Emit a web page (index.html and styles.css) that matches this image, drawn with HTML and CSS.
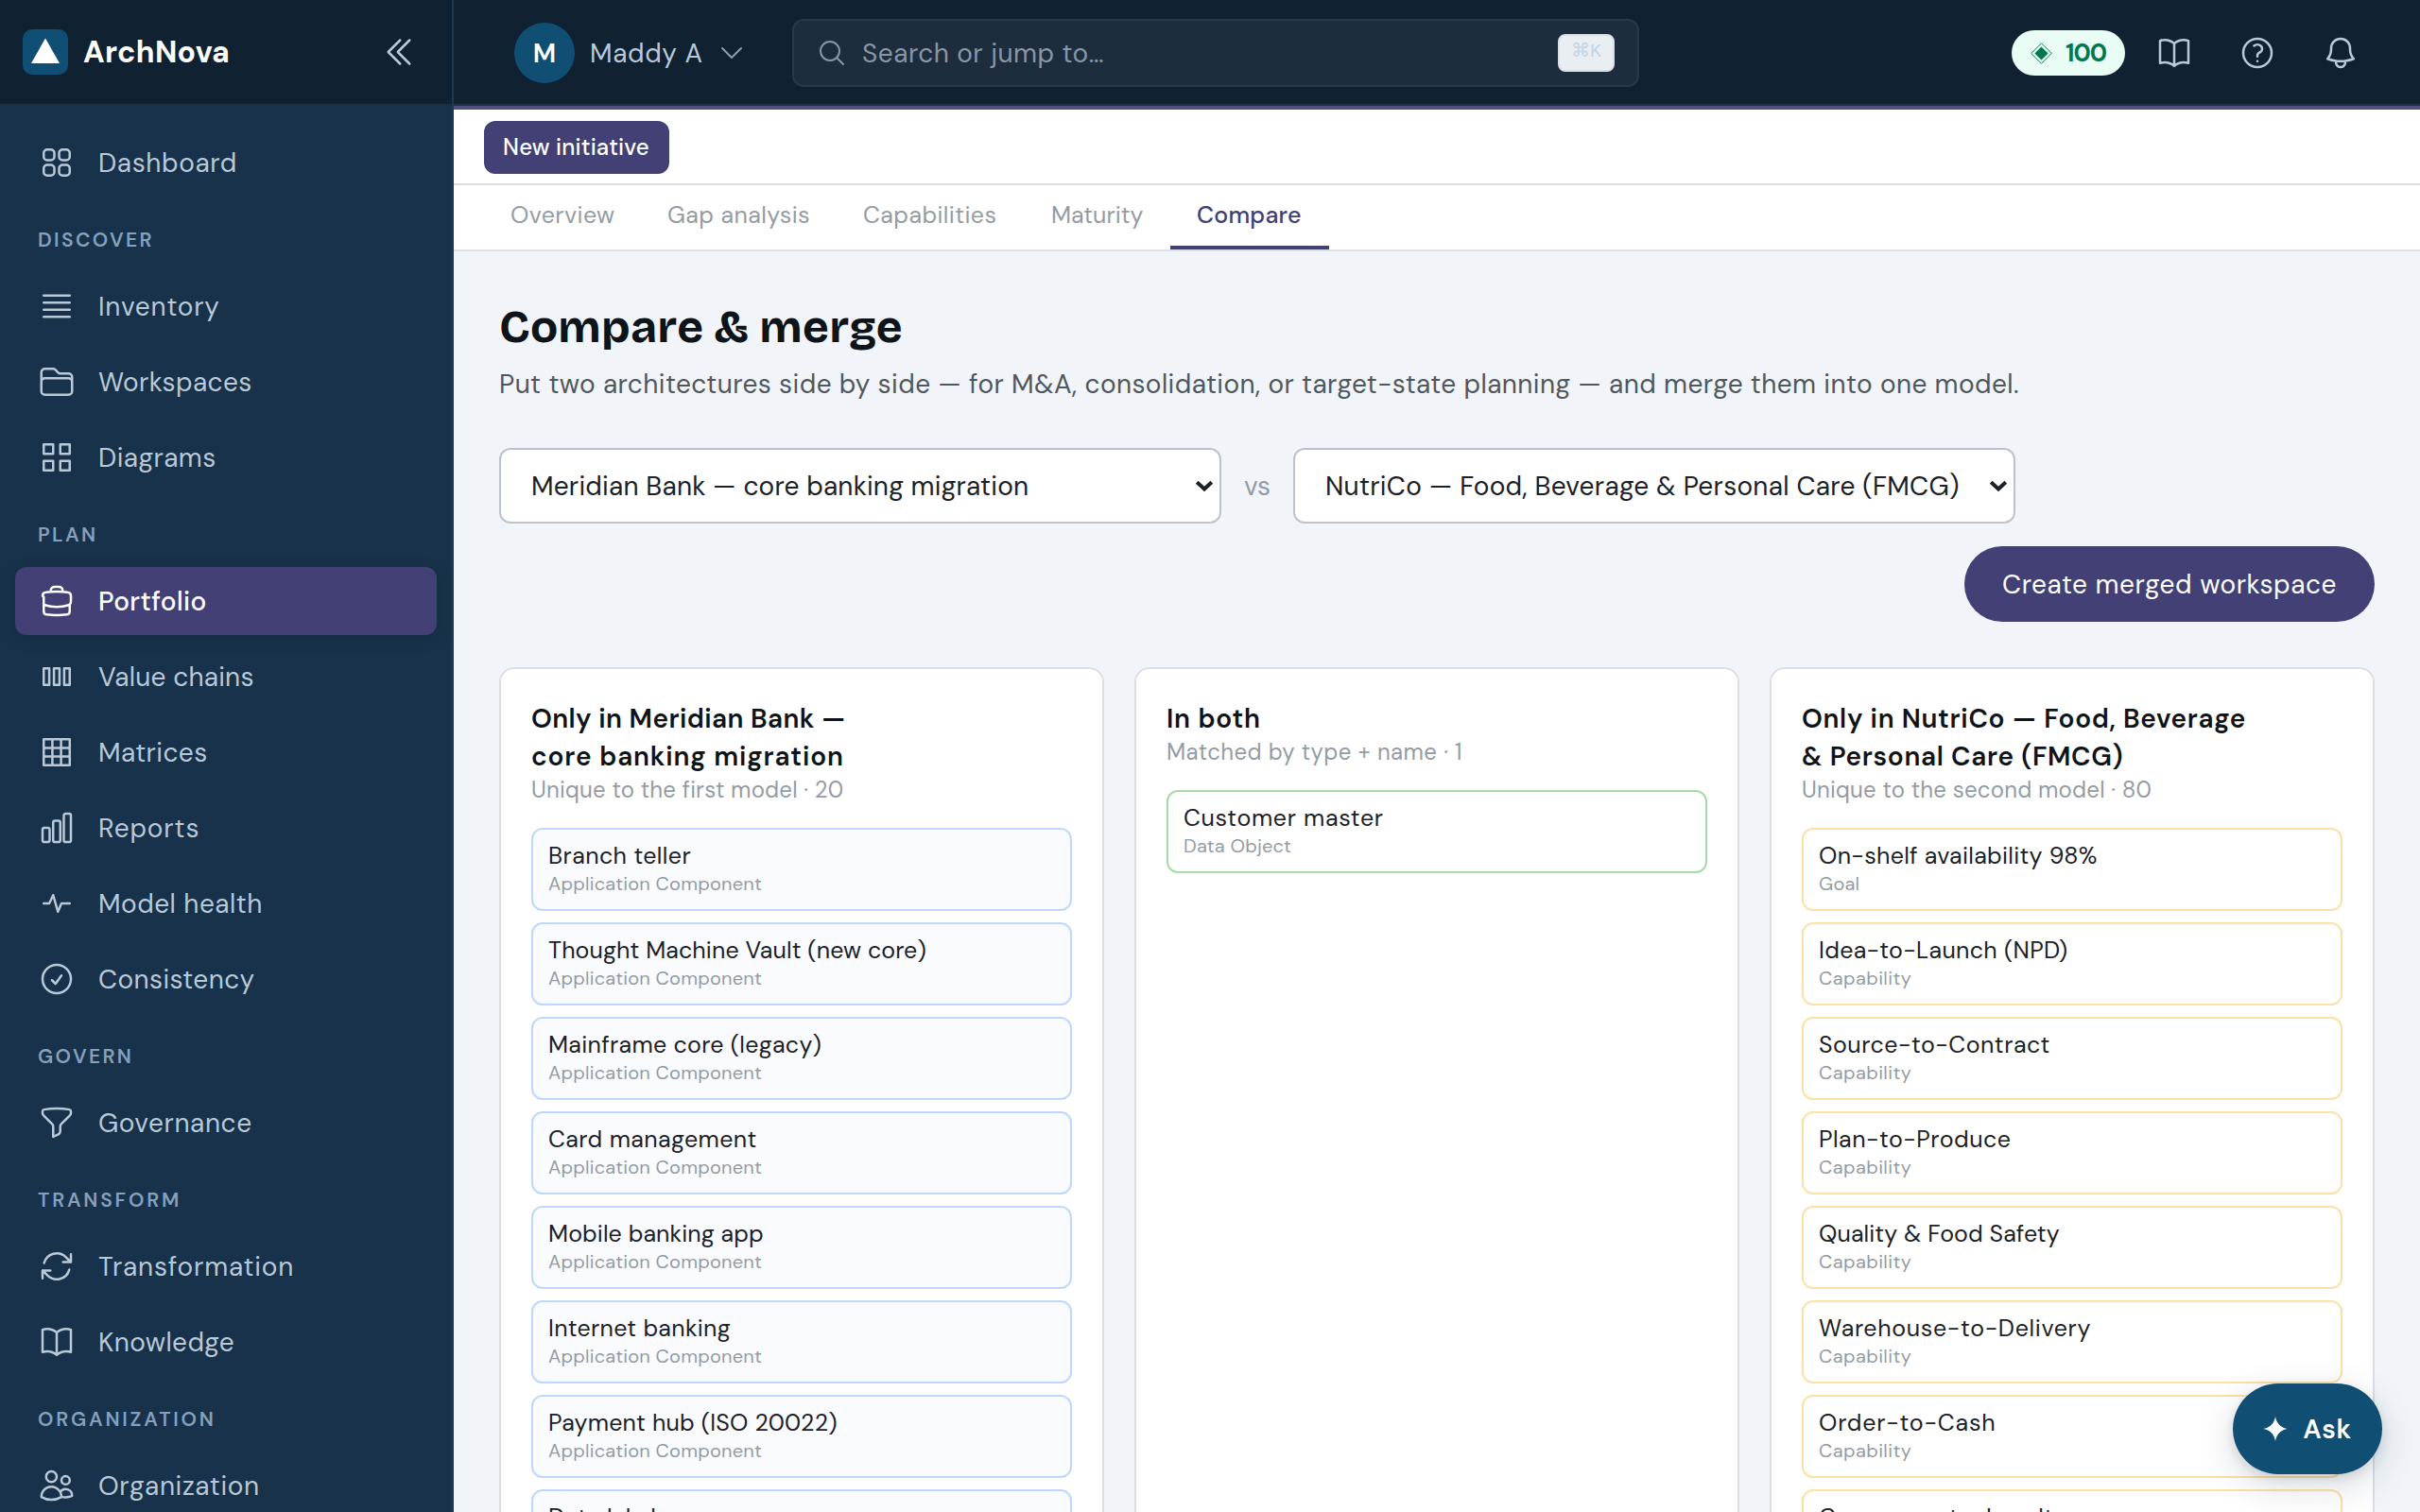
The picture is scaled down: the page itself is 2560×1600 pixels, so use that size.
FILE: index.html
```html
<!DOCTYPE html>
<html lang="en">
<head>
<meta charset="utf-8">
<title>ArchNova – Compare &amp; merge</title>
<link rel="stylesheet" href="styles.css">
</head>
<body>
<div class="app">
  <aside class="sidebar">
    <div class="brand">
      <span class="logo"><svg viewBox="0 0 48 48"><path d="M24 9.5 39 36H9Z"/></svg></span>
      <span class="brand-name">ArchNova</span>
      <svg class="icon collapse" viewBox="0 0 24 24"><path d="m18.75 4.5-7.5 7.5 7.5 7.5m-6-15L5.25 12l7.5 7.5"/></svg>
    </div>
    <nav class="nav">
      <a class="nav-item ls-6"><svg class="icon" viewBox="0 0 24 24"><path d="M3.75 6A2.25 2.25 0 0 1 6 3.75h2.25A2.25 2.25 0 0 1 10.5 6v2.25a2.25 2.25 0 0 1-2.25 2.25H6a2.25 2.25 0 0 1-2.25-2.25V6ZM3.75 15.75A2.25 2.25 0 0 1 6 13.5h2.25a2.25 2.25 0 0 1 2.25 2.25V18a2.25 2.25 0 0 1-2.25 2.25H6A2.25 2.25 0 0 1 3.75 18v-2.25ZM13.5 6a2.25 2.25 0 0 1 2.25-2.25H18A2.25 2.25 0 0 1 20.25 6v2.25A2.25 2.25 0 0 1 18 10.5h-2.25a2.25 2.25 0 0 1-2.25-2.25V6ZM13.5 15.75a2.25 2.25 0 0 1 2.25-2.25H18a2.25 2.25 0 0 1 2.25 2.25V18A2.25 2.25 0 0 1 18 20.25h-2.25A2.25 2.25 0 0 1 13.5 18v-2.25Z"/></svg>Dashboard</a>
      <h2 class="nav-heading">DISCOVER</h2>
      <a class="nav-item ls-8"><svg class="icon" viewBox="0 0 24 24"><path d="M3.75 5.25h16.5m-16.5 4.5h16.5m-16.5 4.5h16.5m-16.5 4.5h16.5"/></svg>Inventory</a>
      <a class="nav-item"><svg class="icon" viewBox="0 0 24 24"><path d="M2.25 12.75V12A2.25 2.25 0 0 1 4.5 9.75h15A2.25 2.25 0 0 1 21.75 12v.75m-8.69-6.44-2.12-2.12a1.5 1.5 0 0 0-1.061-.44H4.5A2.25 2.25 0 0 0 2.25 6v12a2.25 2.25 0 0 0 2.25 2.25h15A2.25 2.25 0 0 0 21.75 18V9a2.25 2.25 0 0 0-2.25-2.25h-5.379a1.5 1.5 0 0 1-1.06-.44Z"/></svg>Workspaces</a>
      <a class="nav-item"><svg class="icon" viewBox="0 0 24 24"><path d="M3.75 3.75h6v6h-6zM14.25 3.75h6v6h-6zM3.75 14.25h6v6h-6zM14.25 14.25h6v6h-6z"/></svg>Diagrams</a>
      <h2 class="nav-heading">PLAN</h2>
      <a class="nav-item active"><svg class="icon" viewBox="0 0 24 24"><path d="M20.25 14.15v4.25c0 1.094-.787 2.036-1.872 2.18-2.087.277-4.216.42-6.378.42s-4.291-.143-6.378-.42c-1.085-.144-1.872-1.086-1.872-2.18v-4.25m16.5 0a2.18 2.18 0 0 0 .75-1.661V8.706c0-1.081-.768-2.015-1.837-2.175a48.114 48.114 0 0 0-3.413-.387m4.5 8.006c-.194.165-.42.295-.673.38A23.978 23.978 0 0 1 12 15.75c-2.648 0-5.195-.429-7.577-1.22a2.016 2.016 0 0 1-.673-.38m0 0V9.4A2.18 2.18 0 0 1 3 8.706c0-1.081.768-2.015 1.837-2.175a48.111 48.111 0 0 1 3.413-.387m7.5 0V5.25A2.25 2.25 0 0 0 13.5 3h-3a2.25 2.25 0 0 0-2.25 2.25v.894m7.5 0a48.667 48.667 0 0 0-7.5 0"/></svg>Portfolio</a>
      <a class="nav-item ls-2"><svg class="icon" viewBox="0 0 24 24"><path d="M3.75 6.75h3.5v10.5h-3.5zM10.25 6.75h3.5v10.5h-3.5zM16.75 6.75h3.5v10.5h-3.5z"/></svg>Value chains</a>
      <a class="nav-item"><svg class="icon" viewBox="0 0 24 24"><path d="M3.75 3.75h16.5v16.5H3.75zM3.75 9.25h16.5M3.75 14.75h16.5M9.25 3.75v16.5M14.75 3.75v16.5"/></svg>Matrices</a>
      <a class="nav-item ls-9"><svg class="icon" viewBox="0 0 24 24"><path d="M3 13.125C3 12.504 3.504 12 4.125 12h2.25c.621 0 1.125.504 1.125 1.125v6.75C7.5 20.496 6.996 21 6.375 21h-2.25A1.125 1.125 0 0 1 3 19.875v-6.75ZM9.75 8.625c0-.621.504-1.125 1.125-1.125h2.25c.621 0 1.125.504 1.125 1.125v11.25c0 .621-.504 1.125-1.125 1.125h-2.25a1.125 1.125 0 0 1-1.125-1.125V8.625ZM16.5 4.125c0-.621.504-1.125 1.125-1.125h2.25C20.496 3 21 3.504 21 4.125v15.75c0 .621-.504 1.125-1.125 1.125h-2.25a1.125 1.125 0 0 1-1.125-1.125V4.125Z"/></svg>Reports</a>
      <a class="nav-item ls-5"><svg class="icon" viewBox="0 0 24 24"><path d="M3.75 12h3.5l2.5-5.25 3 10.5L15 12h5.25"/></svg>Model health</a>
      <a class="nav-item"><svg class="icon" viewBox="0 0 24 24"><path d="M9 12.75 11.25 15 15 9.75M21 12a9 9 0 1 1-18 0 9 9 0 0 1 18 0Z"/></svg>Consistency</a>
      <h2 class="nav-heading">GOVERN</h2>
      <a class="nav-item ls-6"><svg class="icon" viewBox="0 0 24 24"><path d="M12 3c2.755 0 5.455.232 8.083.678.533.09.917.556.917 1.096v1.044a2.25 2.25 0 0 1-.659 1.591l-5.432 5.432a2.25 2.25 0 0 0-.659 1.591v2.927a2.25 2.25 0 0 1-1.244 2.013L9.75 21v-6.568a2.25 2.25 0 0 0-.659-1.591L3.659 7.409A2.25 2.25 0 0 1 3 5.818V4.774c0-.54.384-1.006.917-1.096A48.32 48.32 0 0 1 12 3Z"/></svg>Governance</a>
      <h2 class="nav-heading wide">TRANSFORM</h2>
      <a class="nav-item ls-8"><svg class="icon" viewBox="0 0 24 24"><path d="M16.023 9.348h4.992v-.001M2.985 19.644v-4.992m0 0h4.992m-4.993 0 3.181 3.183a8.25 8.25 0 0 0 13.803-3.7M4.031 9.865a8.25 8.25 0 0 1 13.803-3.7l3.181 3.182m0-4.991v4.99"/></svg>Transformation</a>
      <a class="nav-item"><svg class="icon" viewBox="0 0 24 24"><path d="M12 6.042A8.967 8.967 0 0 0 6 3.75c-1.052 0-2.062.18-3 .512v14.25A8.987 8.987 0 0 1 6 18c2.305 0 4.408.867 6 2.292m0-14.25a8.966 8.966 0 0 1 6-2.292c1.052 0 2.062.18 3 .512v14.25A8.987 8.987 0 0 0 18 18a8.967 8.967 0 0 0-6 2.292m0-14.25v14.25"/></svg>Knowledge</a>
      <h2 class="nav-heading wide">ORGANIZATION</h2>
      <a class="nav-item ls-6"><svg class="icon" viewBox="0 0 24 24"><path d="M15 19.128a9.38 9.38 0 0 0 2.625.372 9.337 9.337 0 0 0 4.121-.952 4.125 4.125 0 0 0-7.533-2.493M15 19.128v-.003c0-1.113-.285-2.16-.786-3.07M15 19.128v.106A12.318 12.318 0 0 1 8.624 21c-2.331 0-4.512-.645-6.374-1.766l-.001-.109a6.375 6.375 0 0 1 11.964-3.07M12 6.375a3.375 3.375 0 1 1-6.75 0 3.375 3.375 0 0 1 6.75 0Zm8.25 2.25a2.625 2.625 0 1 1-5.25 0 2.625 2.625 0 0 1 5.25 0Z"/></svg>Organization</a>
    </nav>
  </aside>

  <div class="main">
    <header class="topbar">
      <div class="user">
        <span class="avatar">M</span>
        <span class="user-name">Maddy A</span>
        <svg class="icon icon-sm" viewBox="0 0 24 24"><path d="m19.5 8.25-7.5 7.5-7.5-7.5"/></svg>
      </div>
      <div class="search">
        <svg class="icon icon-sm" viewBox="0 0 24 24"><path d="m21 21-5.197-5.197m0 0A7.5 7.5 0 1 0 5.196 5.196a7.5 7.5 0 0 0 10.607 10.607Z"/></svg>
        <span class="placeholder">Search or jump to…</span>
        <kbd class="kbd">⌘K</kbd>
      </div>
      <div class="actions">
        <span class="credits"><svg viewBox="0 0 24 24"><path class="ring" d="M12 .8 23.2 12 12 23.2.8 12Z"/><path d="M12 4.6 19.4 12 12 19.4 4.6 12Z"/></svg>100</span>
        <svg class="icon" viewBox="0 0 24 24"><path d="M12 6.042A8.967 8.967 0 0 0 6 3.75c-1.052 0-2.062.18-3 .512v14.25A8.987 8.987 0 0 1 6 18c2.305 0 4.408.867 6 2.292m0-14.25a8.966 8.966 0 0 1 6-2.292c1.052 0 2.062.18 3 .512v14.25A8.987 8.987 0 0 0 18 18a8.967 8.967 0 0 0-6 2.292m0-14.25v14.25"/></svg>
        <svg class="icon" viewBox="0 0 24 24"><path d="M9.879 7.519c1.171-1.025 3.071-1.025 4.242 0 1.172 1.025 1.172 2.687 0 3.712-.203.179-.43.326-.67.442-.745.361-1.45.999-1.45 1.827v.75M21 12a9 9 0 1 1-18 0 9 9 0 0 1 18 0Zm-9 5.25h.008v.008H12v-.008Z"/></svg>
        <svg class="icon" viewBox="0 0 24 24"><path d="M14.857 17.082a23.848 23.848 0 0 0 5.454-1.31A8.967 8.967 0 0 1 18 9.75V9A6 6 0 0 0 6 9v.75a8.967 8.967 0 0 1-2.312 6.022c1.733.64 3.56 1.085 5.455 1.31m5.714 0a24.255 24.255 0 0 1-5.714 0m5.714 0a3 3 0 1 1-5.714 0"/></svg>
      </div>
    </header>
    <div class="toolbar"><button class="btn-new">New initiative</button></div>
    <div class="tabs">
      <a class="tab ls-4">Overview</a><a class="tab ls-4">Gap analysis</a><a class="tab ls-4">Capabilities</a><a class="tab">Maturity</a><a class="tab selected ls-2">Compare</a>
    </div>

    <main class="content">
      <h1 class="title">Compare &amp; merge</h1>
      <p class="subtitle">Put two architectures side by side — for M&amp;A, consolidation, or target-state planning — and merge them into one model.</p>
      <div class="picker">
        <div class="select ls-2"><span>Meridian Bank — core banking migration</span><svg viewBox="0 0 20 12"><path d="m2.2 2.2 7.8 7.3 7.8-7.3"/></svg></div>
        <span class="vs">vs</span>
        <div class="select ls-3"><span>NutriCo — Food, Beverage &amp; Personal Care (FMCG)</span><svg viewBox="0 0 20 12"><path d="m2.2 2.2 7.8 7.3 7.8-7.3"/></svg></div>
      </div>
      <div class="merge-row"><button class="btn-merge">Create merged workspace</button></div>

      <div class="columns">
        <section class="card blue">
          <h3><span class="ls-4">Only in Meridian Bank —</span><br><span class="ls-9">core banking migration</span></h3>
          <p class="meta ls-2">Unique to the first model · 20</p>
          <ul class="list">
            <li><b class="ls-4">Branch teller</b><small>Application Component</small></li>
            <li><b class="ls-1">Thought Machine Vault (new core)</b><small>Application Component</small></li>
            <li><b>Mainframe core (legacy)</b><small>Application Component</small></li>
            <li><b class="ls-4">Card management</b><small>Application Component</small></li>
            <li><b class="ls-1">Mobile banking app</b><small>Application Component</small></li>
            <li><b>Internet banking</b><small>Application Component</small></li>
            <li><b class="ls-2">Payment hub (ISO 20022)</b><small>Application Component</small></li>
            <li><b>Data lakehouse</b><small>Application Component</small></li>
          </ul>
        </section>
        <section class="card green">
          <h3 class="ls-8">In both</h3>
          <p class="meta ls-4">Matched by type + name · 1</p>
          <ul class="list">
            <li><b class="ls-7">Customer master</b><small>Data Object</small></li>
          </ul>
        </section>
        <section class="card amber">
          <h3 class="ls-7">Only in NutriCo — Food, Beverage<br>&amp; Personal Care (FMCG)</h3>
          <p class="meta ls-2">Unique to the second model · 80</p>
          <ul class="list">
            <li><b>On-shelf availability 98%</b><small>Goal</small></li>
            <li><b>Idea-to-Launch (NPD)</b><small class="ls-4">Capability</small></li>
            <li><b class="ls-5">Source-to-Contract</b><small class="ls-4">Capability</small></li>
            <li><b class="ls-5">Plan-to-Produce</b><small class="ls-4">Capability</small></li>
            <li><b class="ls-1">Quality &amp; Food Safety</b><small class="ls-4">Capability</small></li>
            <li><b class="ls-7">Warehouse-to-Delivery</b><small class="ls-4">Capability</small></li>
            <li><b class="ls-8">Order-to-Cash</b><small class="ls-4">Capability</small></li>
            <li><b class="ls-5">Consumer-to-Loyalty</b><small class="ls-4">Capability</small></li>
          </ul>
        </section>
      </div>
    </main>
  </div>
  <button class="ask"><svg viewBox="0 0 24 24"><path d="M12 0C13.2 7 17 10.8 24 12 17 13.2 13.2 17 12 24 10.8 17 7 13.2 0 12 7 10.8 10.8 7 12 0Z"/></svg>Ask</button>
</div>
</body>
</html>
```
FILE: styles.css
```css
* { box-sizing: border-box; }
body {
  margin: 0;
  font-family: "DM Sans", Inter, "Liberation Sans", sans-serif;
  font-size: 28px;
  color: #1b2126;
  background: #f1f5f9;
}
h1, h2, h3, p, ul { margin: 0; padding: 0; }
button { font: inherit; border: 0; color: #fff; }

.app { display: flex; width: 2560px; height: 1600px; overflow: hidden; position: relative; }

.icon { width: 40px; height: 40px; flex: none; fill: none; stroke: currentColor; stroke-width: 1.5; stroke-linecap: round; stroke-linejoin: round; }
.icon-sm { width: 32px; height: 32px; }

/* Sidebar */
.sidebar { width: 480px; flex: none; background: #17324a; color: #b9c9d8; border-right: 2px solid #20394e; }
.brand { height: 112px; display: flex; align-items: center; padding: 0 36px 0 24px; background: #102232; border-bottom: 2px solid #1c3042; }
.logo { width: 48px; height: 48px; border-radius: 10px; background: #114e74; margin-right: 16px; }
.logo svg { display: block; fill: #fff; }
.brand-name { color: #fff; font-size: 32px; font-weight: 700; letter-spacing: 0.3px; }
.collapse { margin-left: auto; }
.nav { padding: 24px 16px; display: flex; flex-direction: column; gap: 8px; }
.nav-item { height: 72px; flex: none; display: flex; align-items: center; gap: 24px; padding: 0 24px; border-radius: 12px; letter-spacing: 0.4px; }
.nav-item.active { background: #424074; color: #fff; font-weight: 500; box-shadow: 0 4px 16px rgba(10, 30, 45, 0.25); }
.nav-heading { height: 64px; flex: none; padding: 20px 24px 0; font-size: 21px; line-height: 36px; font-weight: 600; letter-spacing: 2.4px; color: #86a0bc; }
.nav-heading.wide { letter-spacing: 2.8px; }

/* Top bar */
.main { flex: 1; min-width: 0; display: flex; flex-direction: column; }
.topbar { height: 116px; flex: none; display: flex; align-items: flex-start; background: #102232; border-bottom: 4px solid #52517f; box-shadow: inset 0 -2px 0 #1d3144; color: #b9c9d8; }
.user { height: 112px; display: flex; align-items: center; margin-left: 64px; width: 294px; }
.avatar { width: 64px; height: 64px; border-radius: 50%; background: #114e74; color: #fff; display: grid; place-items: center; font-weight: 600; margin-right: 16px; }
.user-name { letter-spacing: 0.6px; margin-right: 14px; }
.user .icon { color: #8c9cab; }
.search { width: 896px; height: 72px; margin-top: 20px; display: flex; align-items: center; padding: 0 24px; border: 2px solid #27384a; border-radius: 12px; background: #1d2d3d; color: #8797a6; }
.placeholder { margin-left: 16px; letter-spacing: 0.5px; }
.kbd { margin-left: auto; width: 60px; height: 40px; border-radius: 8px; border: 2px solid #d9e0e6; background: #e9eef3; color: #c4d4e2; font: 20px/34px "Liberation Mono", "DejaVu Sans", monospace; text-align: center; }
.actions { height: 112px; margin-left: auto; padding-right: 64px; display: flex; align-items: center; gap: 48px; }
.credits { width: 120px; height: 48px; border-radius: 24px; margin-right: -16px; padding-left: 20px; display: flex; align-items: center; background: #e9fdf4; color: #00774f; font-size: 26px; font-weight: 700; letter-spacing: -1px; }
.credits svg { width: 23px; height: 23px; margin-right: 14px; fill: currentColor; }
.credits .ring { fill: none; stroke: currentColor; stroke-width: 1; }

.toolbar { height: 80px; flex: none; padding: 12px 32px; background: #fff; border-bottom: 2px solid #d9dfe4; }
.btn-new { width: 196px; height: 56px; padding: 0 1px 2px 0; border-radius: 12px; background: #424074; font-size: 24px; font-weight: 500; letter-spacing: 0.2px; }
.tabs { height: 70px; flex: none; display: flex; padding: 0 32px; background: #fff; border-bottom: 2px solid #d9dfe4; }
.tab { width: 166px; padding-left: 28px; line-height: 64px; font-size: 25px; color: #949ca3; white-space: nowrap; }
.tab:nth-child(2) { width: 207px; }
.tab:nth-child(3) { width: 199px; }
.tab:nth-child(4) { width: 154px; }
.tab.selected { width: 168px; color: #424074; font-weight: 500; border-bottom: 4px solid #424074; }

/* Page */
.content { padding: 46px 48px 0; }
.title { font-family: "Bricolage Grotesque", "DM Sans", Inter, sans-serif; font-size: 48px; line-height: 68px; font-weight: 700; letter-spacing: 0.25px; color: #0f1418; }
.subtitle { margin-top: 7px; line-height: 40px; color: #50575d; letter-spacing: 0.42px; }
.picker { margin-top: 47px; display: flex; align-items: center; }
.select { width: 764px; height: 80px; display: flex; align-items: center; justify-content: space-between; padding: 0 6px 0 32px; border: 2px solid #bcc3ca; border-radius: 12px; background: #fff; }
.select svg { width: 20px; height: 12px; fill: none; stroke: #1b2126; stroke-width: 4; }
.vs { width: 76px; text-align: center; color: #949ca3; }
.merge-row { margin-top: 24px; display: flex; justify-content: flex-end; }
.btn-merge { width: 434px; height: 80px; border-radius: 40px; background: #424074; letter-spacing: 0.55px; padding: 0; }

.columns { margin-top: 48px; display: grid; grid-template-columns: repeat(3, 1fr); gap: 32px; }
.card { min-height: 1000px; padding: 33px 32px 32px; background: #fff; border: 2px solid #d9dfe4; border-radius: 16px; }
.card h3 { font-size: 28px; line-height: 40px; font-weight: 600; color: #0f1418; }
.meta { margin-top: -1px; font-size: 24px; line-height: 32px; color: #949ca3; }
.list { margin-top: 24px; list-style: none; display: flex; flex-direction: column; gap: 12px; }
.list li { height: 88px; padding: 10px 16px; border: 2px solid; border-radius: 12px; }
.list b, .list small { display: block; }
.list b { font-size: 25px; line-height: 36px; font-weight: 400; letter-spacing: 0.3px; }
.list small { font-size: 20px; line-height: 22px; color: #949ca3; letter-spacing: 0.22px; }
.blue li { border-color: #bcd9fd; background: #fafbff; }
.green li { border-color: #a5dca5; }
.amber li { border-color: #fde0a6; }

.ask { position: absolute; right: 40px; bottom: 40px; width: 158px; height: 96px; border-radius: 48px; display: flex; align-items: center; justify-content: center; gap: 16px; background: #114e74; font-weight: 600; letter-spacing: 0.6px; box-shadow: 0 12px 40px rgba(15, 30, 50, 0.16), 0 4px 12px rgba(15, 30, 50, 0.12); padding: 0; }
.ask svg { width: 26px; height: 26px; fill: #fff; }

/* Tracking steps, in tenths of a pixel */
.app .ls-1 { letter-spacing: 0.1px; }
.app .ls-2 { letter-spacing: 0.2px; }
.app .ls-3 { letter-spacing: 0.27px; }
.app .ls-4 { letter-spacing: 0.4px; }
.app .ls-5 { letter-spacing: 0.5px; }
.app .ls-6 { letter-spacing: 0.6px; }
.app .ls-7 { letter-spacing: 0.67px; }
.app .ls-8 { letter-spacing: 0.8px; }
.app .ls-9 { letter-spacing: 0.87px; }
```
